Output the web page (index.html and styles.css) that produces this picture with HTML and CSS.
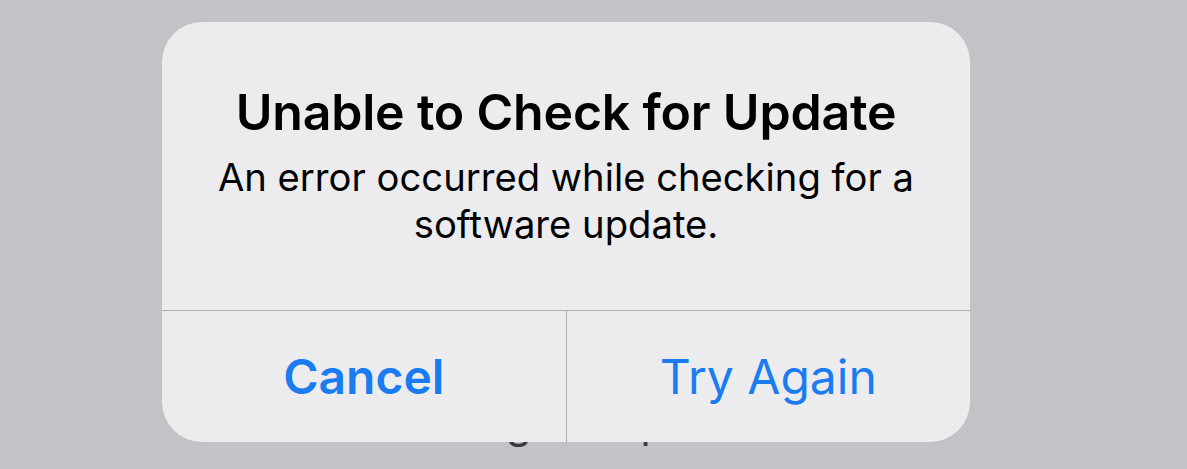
FILE: index.html
```html
<!DOCTYPE html>
<html lang="en">
<head>
<meta charset="utf-8">
<title>Unable to Check for Update</title>
<link rel="stylesheet" href="styles.css">
</head>
<body>
<div class="screen">
  <p class="status">Checking for Update</p>
  <div class="alert" role="alertdialog">
    <div class="alert-body">
      <h1 class="alert-title">Unable to Check for Update</h1>
      <p class="alert-message">An error occurred while checking for a software update.</p>
    </div>
    <div class="alert-actions">
      <button class="alert-btn alert-btn-cancel">Cancel</button>
      <button class="alert-btn alert-btn-primary">Try Again</button>
    </div>
  </div>
</div>
</body>
</html>
```
FILE: styles.css
```css
html, body {
  margin: 0;
  padding: 0;
}
body {
  background: #c3c2c7;
  font-family: Inter, "Noto Sans", sans-serif;
  width: 1187px;
  height: 469px;
  overflow: hidden;
}
.screen {
  position: relative;
  width: 1187px;
  height: 469px;
}
.status {
  margin: 0;
  padding-top: 413px;
  padding-left: 346px;
  font-size: 41.5px;
  line-height: 20px;
  color: #3a3a3e;
  white-space: nowrap;
}
.alert {
  position: absolute;
  left: 162px;
  top: 22px;
  width: 808px;
  height: 420px;
  background: #ececee;
  border-radius: 40px;
  display: flex;
  flex-direction: column;
  overflow: hidden;
}
.alert-body {
  height: 288px;
  box-sizing: border-box;
  padding: 61px 30px 0;
  text-align: center;
}
.alert-title {
  margin: 0;
  font-size: 50px;
  line-height: 58px;
  font-weight: 600;
  color: #000;
  letter-spacing: -0.2px;
}
.alert-message {
  margin: 13px auto 0;
  max-width: 740px;
  font-size: 38.2px;
  line-height: 47px;
  font-weight: 400;
  color: #000;
}
.alert-actions {
  flex: 1;
  display: flex;
  border-top: 1px solid #a9a9ae;
}
.alert-btn {
  flex: 1;
  margin: 0;
  padding: 0;
  border: 0;
  background: transparent;
  font-family: inherit;
  font-size: 48px;
  line-height: 58px;
  color: #1b7cf2;
  display: flex;
  align-items: center;
  justify-content: center;
}
.alert-btn-cancel {
  font-weight: 600;
}
.alert-btn-primary {
  font-weight: 400;
  border-left: 1px solid #a9a9ae;
}
```
